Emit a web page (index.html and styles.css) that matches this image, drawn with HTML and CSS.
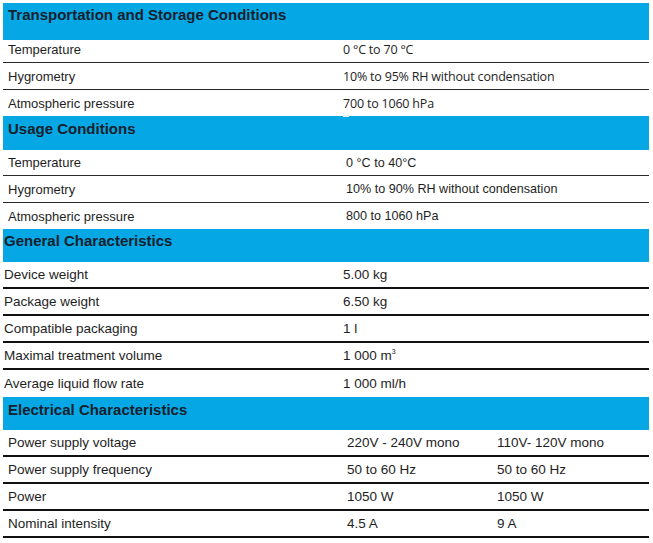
FILE: index.html
```html
<!DOCTYPE html>
<html>
<head>
<meta charset="utf-8">
<link rel="stylesheet" href="styles.css">
</head>
<body>
<div class="spec">
  <section class="block s1">
    <div class="head">Transportation and Storage Conditions</div>
    <div class="row r-a"><div class="lab">Temperature</div><div class="val">0 °C to 70 °C</div></div>
    <div class="row"><div class="lab">Hygrometry</div><div class="val">10% to 95% RH without condensation</div></div>
    <div class="row last r-c"><div class="lab">Atmospheric pressure</div><div class="val">700 to 1060 hPa</div></div>
  </section>
  <section class="block s2">
    <div class="head">Usage Conditions<span class="speck"></span></div>
    <div class="row r-a"><div class="lab">Temperature</div><div class="val">0 °C to 40°C</div></div>
    <div class="row"><div class="lab">Hygrometry</div><div class="val">10% to 90% RH without condensation</div></div>
    <div class="row last r-c"><div class="lab">Atmospheric pressure</div><div class="val">800 to 1060 hPa</div></div>
  </section>
  <section class="block s3">
    <div class="head">General Characteristics</div>
    <div class="row"><div class="lab">Device weight</div><div class="val">5.00 kg</div></div>
    <div class="row"><div class="lab">Package weight</div><div class="val">6.50 kg</div></div>
    <div class="row"><div class="lab">Compatible packaging</div><div class="val">1 l</div></div>
    <div class="row"><div class="lab">Maximal treatment volume</div><div class="val">1 000 m<sup>3</sup></div></div>
    <div class="row last"><div class="lab">Average liquid flow rate</div><div class="val">1 000 ml/h</div></div>
  </section>
  <section class="block s4">
    <div class="head">Electrical Characteristics</div>
    <div class="row"><div class="lab">Power supply voltage</div><div class="val">220V - 240V mono</div><div class="val2">110V- 120V mono</div></div>
    <div class="row"><div class="lab">Power supply frequency</div><div class="val">50 to 60 Hz</div><div class="val2">50 to 60 Hz</div></div>
    <div class="row"><div class="lab">Power</div><div class="val">1050 W</div><div class="val2">1050 W</div></div>
    <div class="row"><div class="lab">Nominal intensity</div><div class="val">4.5 A</div><div class="val2">9 A</div></div>
  </section>
</div>
</body>
</html>
```
FILE: styles.css
```css
html, body {
  margin: 0;
  padding: 0;
  background: #ffffff;
}
body {
  font-family: "Liberation Sans", Arial, sans-serif;
  color: #1e1e1e;
}
.spec {
  margin: 3px 4px 0 3px;
  width: 646px;
}
.block {
  display: flex;
  flex-direction: column;
}
.head {
  position: relative;
  background: #05a8e5;
  color: #16202c;
  font-weight: bold;
  font-size: 15px;
  line-height: 17px;
  height: 34px;
  box-sizing: border-box;
  padding: 3px 0 0 5px;
}
.speck {
  position: absolute;
  left: 340px;
  top: -1px;
  width: 6px;
  height: 2px;
  background: #e8f6fc;
}
.row {
  display: grid;
  grid-template-columns: 337px 150px 1fr;
  height: 27px;
  box-sizing: border-box;
  border-bottom: 1px solid #2a2a2a;
  align-items: center;
  font-size: 13.5px;
}
.row.last {
  border-bottom: none;
}
.lab {
  padding-left: 5px;
}
.val {
  grid-column: 2 / 4;
  padding-left: 3px;
}
.val2 {
  grid-column: 3;
  padding-left: 7px;
}
sup {
  font-size: 7px;
  vertical-align: 6px;
  line-height: 0;
}

/* section 1 */
.s1 .head {
  height: 37px;
  padding-top: 3px;
}
.s1 .row.r-a {
  height: 23px;
  padding-bottom: 3px;
}
.s1 .row.r-c {
  height: 26px;
}
.s1 .lab,
.s2 .lab {
  font-size: 13px;
}
.s1 .val {
  font-family: "Open Sans", "Liberation Sans", sans-serif;
  font-size: 12.5px;
  letter-spacing: -0.2px;
}

/* section 2 */
.s2 .head {
  padding-top: 4px;
  padding-left: 5px;
}
.s2 .row.r-a,
.s2 .row.r-c {
  height: 26px;
}
.s2 .val {
  padding-left: 6px;
  font-size: 12.6px;
}

/* section 3 */
.s3 .head {
  height: 33px;
  padding-left: 1px;
  padding-top: 3px;
}
.s3 .row,
.s4 .row {
  border-bottom: 2px solid #111111;
}
.s3 .row.last {
  border-bottom: none;
}
.s3 .lab {
  padding-left: 1px;
}
.s3 .val {
  padding-left: 3px;
}

/* section 4 */
.s4 .head {
  height: 33px;
  padding-top: 4px;
  padding-left: 5px;
}
.s4 .val {
  grid-column: 2;
  padding-left: 7px;
}
```
